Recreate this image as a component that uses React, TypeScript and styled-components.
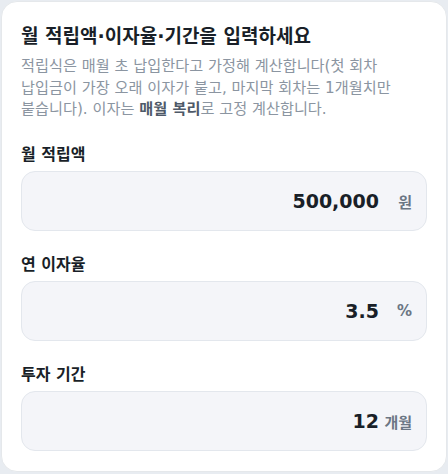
import React, { useState } from "react";
import styled, { createGlobalStyle } from "styled-components";

const GlobalStyle = createGlobalStyle`
  * { box-sizing: border-box; }
  html, body { margin: 0; padding: 0; }
  body {
    background: #e8ecf1;
    font-family: "DejaVu Sans", "Noto Sans CJK KR", sans-serif;
    padding: 1px;
  }
`;

const Card = styled.section`
  width: 446px;
  background: #ffffff;
  border: 1px solid #e5e8eb;
  border-radius: 16px;
  padding: 22px 19px 20px;
`;

const Title = styled.h2`
  margin: 0;
  font-size: 19px;
  line-height: 25px;
  font-weight: 700;
  color: #191f28;
  word-break: keep-all;
`;

const Desc = styled.p`
  margin: 7px 0 0;
  font-size: 15.2px;
  line-height: 21.5px;
  color: #8b95a1;
  word-break: keep-all;
`;

const Strong = styled.strong`
  font-weight: 700;
  color: #4e5968;
`;

const Fields = styled.div`
  margin-top: 24.5px;
  display: flex;
  flex-direction: column;
  gap: 24px;
`;

const Field = styled.label`
  display: flex;
  flex-direction: column;
  gap: 6px;
`;

const Label = styled.span`
  font-size: 16px;
  line-height: 20px;
  font-weight: 700;
  color: #191f28;
`;

const Box = styled.div`
  height: 60px;
  display: flex;
  align-items: center;
  background: #f4f5f9;
  border: 1px solid #e3e7ed;
  border-radius: 14px;
  padding: 0 14px 0 16px;
`;

const Input = styled.input`
  flex: 1;
  min-width: 0;
  border: none;
  outline: none;
  background: transparent;
  text-align: right;
  font-family: "DejaVu Sans", "Noto Sans CJK KR", sans-serif;
  font-size: 19px;
  font-weight: 700;
  color: #191f28;
  padding: 0;
`;

const Unit = styled.span`
  min-width: 30px;
  margin-left: 3px;
  text-align: right;
  font-size: 15px;
  font-weight: 700;
  color: #6b7684;
`;

export default function App() {
  const [amount, setAmount] = useState("500,000");
  const [rate, setRate] = useState("3.5");
  const [months, setMonths] = useState("12");
  return (
    <>
      <GlobalStyle />
      <Card>
        <Title>월 적립액·이자율·기간을 입력하세요</Title>
        <Desc>
          적립식은 매월 초 납입한다고 가정해 계산합니다(첫 회차 납입금이 가장 오래 이자가 붙고, 마지막
          회차는 1개월치만 붙습니다). 이자는 <Strong>매월 복리</Strong>로 고정 계산합니다.
        </Desc>
        <Fields>
          <Field>
            <Label>월 적립액</Label>
            <Box>
              <Input value={amount} onChange={(e) => setAmount(e.target.value)} inputMode="numeric" />
              <Unit>원</Unit>
            </Box>
          </Field>
          <Field>
            <Label>연 이자율</Label>
            <Box>
              <Input value={rate} onChange={(e) => setRate(e.target.value)} inputMode="decimal" />
              <Unit>%</Unit>
            </Box>
          </Field>
          <Field>
            <Label>투자 기간</Label>
            <Box>
              <Input value={months} onChange={(e) => setMonths(e.target.value)} inputMode="numeric" />
              <Unit>개월</Unit>
            </Box>
          </Field>
        </Fields>
      </Card>
    </>
  );
}
